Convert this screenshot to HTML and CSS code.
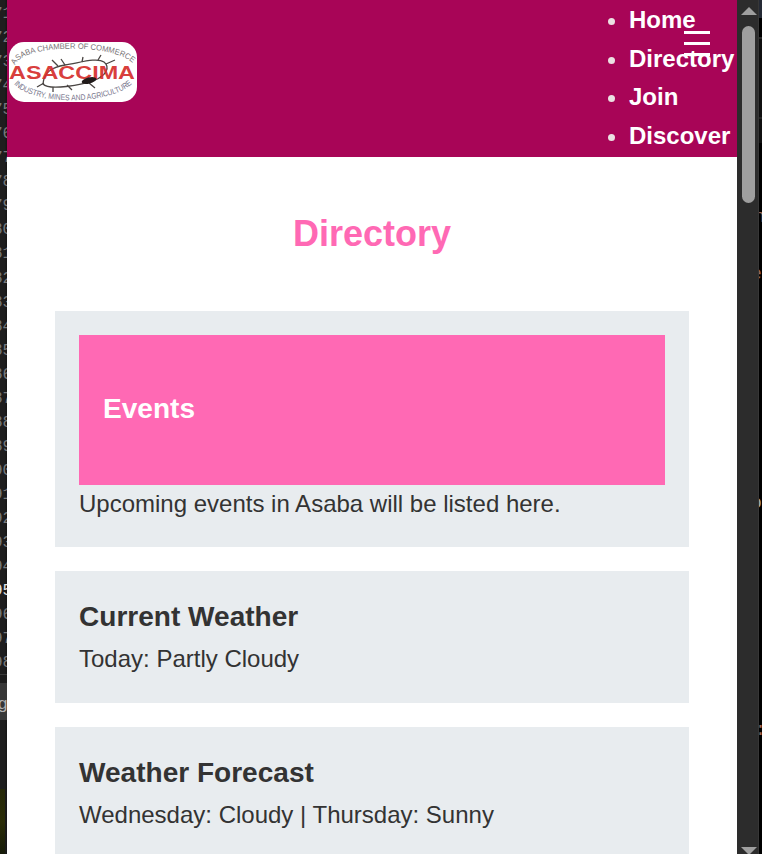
FILE: index.html
```
<!DOCTYPE html>
<html lang="en">
<head>
<meta charset="utf-8">
<title>Directory</title>
<link rel="stylesheet" href="styles.css">
</head>
<body>
<div class="desktop">
  <aside class="editor">
    <ol class="lines">
      <li>71</li><li>72</li><li>73</li><li>74</li><li>75</li><li>76</li><li>77</li><li>78</li><li>79</li><li>80</li><li>81</li><li>82</li><li>83</li><li>84</li><li>85</li><li>86</li><li>87</li><li>88</li><li>89</li><li>90</li><li>91</li><li>92</li><li>93</li><li>94</li><li class="current">95</li><li>96</li><li>97</li><li>98</li>
    </ol>
    <div class="tab">g</div>
    <div class="thumb"></div>
  </aside>
  <div class="page">
    <header class="header">
      <svg class="logo" viewBox="0 0 128 60" role="img" aria-label="ASACCIMA">
        <defs>
          <path id="top" d="M6 23C14 1 112 1 126 24"/>
          <path id="bottom" d="M5 42C25 64 103 64 125 40"/>
        </defs>
        <rect width="128" height="60" fill="#fff"/>
        <text class="arc"><textPath href="#top" textLength="125" lengthAdjust="spacingAndGlyphs">ASABA CHAMBER OF COMMERCE</textPath></text>
        <text class="arc arc-low"><textPath href="#bottom" textLength="125" lengthAdjust="spacingAndGlyphs">INDUSTRY, MINES AND AGRICULTURE</textPath></text>
        <g fill="none" stroke="#4a4543" stroke-width="1.3">
          <path d="M34 42C35 30 43 25 56 23C70 21 88 15 95 20C101 25 98 33 86 38C73 43 40 49 34 42Z"/>
          <path d="M49 24l-6-6M56 23l-4-6M73 20l1-5M89 18l3-5M97 22l9-4M35 41l-7 4M44 45v5M58 43l5 5M80 41l6 5"/>
        </g>
        <text class="name" x="0" y="37" textLength="126" lengthAdjust="spacingAndGlyphs">ASACCIMA</text>
        <ellipse cx="80" cy="38.500" rx="7.500" ry="3" fill="#211b1b" transform="rotate(-14 80 38.500)"/>
      </svg>
      <ul class="menu">
        <li><a>Home</a></li>
        <li><a>Directory</a></li>
        <li><a>Join</a></li>
        <li><a>Discover</a></li>
      </ul>
      <svg class="burger" viewBox="0 0 26 28"><path d="M0 2.500h26M0 13.500h26M0 24.500h26" stroke="#fff" stroke-width="3"/></svg>
    </header>
    <main class="main">
      <h1>Directory</h1>
      <section class="card">
        <div class="banner"><h2>Events</h2></div>
        <p>Upcoming events in Asaba will be listed here.</p>
      </section>
      <section class="card">
        <h2>Current Weather</h2>
        <p>Today: Partly Cloudy</p>
      </section>
      <section class="card">
        <h2>Weather Forecast</h2>
        <p>Wednesday: Cloudy | Thursday: Sunny</p>
      </section>
    </main>
  </div>
  <div class="scrollbar">
    <svg class="up" viewBox="0 0 16 8"><path d="M0 8L8 0L16 8Z"/></svg>
    <div class="handle"></div>
    <svg class="down" viewBox="0 0 16 8"><path d="M0 0H16L8 8Z"/></svg>
  </div>
  <aside class="behind">
    <span class="glyph n">n</span>
    <span class="glyph e">e</span>
    <span class="glyph p">o</span>
    <span class="glyph c">:</span>
  </aside>
</div>
</body>
</html>
```
FILE: styles.css
```
* { box-sizing: border-box; margin: 0; padding: 0; }
body {
  width: 762px; height: 854px; overflow: hidden;
  font: 24px/38.4px "Liberation Sans", Arial, sans-serif;
  color: #333; background: #fff;
}
.desktop { display: flex; height: 854px; overflow: hidden; }

.editor {
  display: flex; flex-direction: column; flex: none;
  width: 7px; overflow: hidden;
  background: linear-gradient(90deg, #1e1e1e 5px, #171717 6px);
}
.lines {
  list-style: none; height: 674px; flex: none; margin-left: -7px; padding-top: 2px;
  font: 16px/24.05px "Liberation Mono", monospace; color: #76797c;
}
.lines .current { color: #e4e4e4; }
.tab {
  flex: none; height: 46px; padding-top: 10px;
  border-top: 1px solid #3b3b3b; background: linear-gradient(#1c1c1c 8px, #373737 8px);
  font: 17px/38px "Liberation Sans", sans-serif; color: #b0b0b0; text-indent: -2px;
}
.thumb { flex: none; width: 5px; height: 65px; margin-top: 69px; background: linear-gradient(#252809, #2b2d08 50%, #171b09); }

.page { flex: none; width: 730px; background: #fff; overflow: hidden; }
.header {
  position: relative; display: flex; justify-content: space-between;
  height: 157px; padding-top: 1px; background: #a80557;
}
.logo { width: 128px; height: 60px; margin: 41px 0 0 2px; border-radius: 15px; }
.arc { font: 8px "Liberation Sans", sans-serif; fill: #777276; }
.arc-low { fill: #77758b; }
.name { font: bold 18px "Liberation Sans", sans-serif; fill: #d52c2a; fill-opacity: .92; }
.menu { width: 108px; font-weight: bold; line-height: 38.6px; color: #ebe1e2; }
.menu a { color: #fff; }
.burger { position: absolute; left: 677px; top: 30px; width: 26px; height: 28px; }

.main { padding: 57px 48px 0; }
h1 { width: 634px; margin: 0 0 58px; font-size: 36px; line-height: 39px; color: #ff69b4; text-align: center; }
h2 { padding-bottom: 2px; font-size: 28.05px; line-height: 43px; }
.card { width: 634px; height: 132px; margin-bottom: 24px; padding: 24px; background: #e8ecef; }
.card:first-of-type { height: 236px; }
.banner { display: flex; align-items: center; height: 150px; padding: 0 24px 2px; background: #ff69b4; color: #fff; }

.scrollbar {
  display: flex; flex-direction: column; align-items: center; flex: none;
  width: 22px; padding: 7px 0 0; background: #2c2c2c; border-right: 1px solid #373737;
}
.scrollbar svg { width: 16px; height: 8px; fill: #9f9f9f; }
.handle { width: 13px; height: 177px; margin: 11px 0 644px; border-radius: 7px; background: #9f9f9f; }
.scrollbar > * { flex: none; transform: translateX(1px); }

.behind {
  position: relative; flex: none; width: 3px; overflow: hidden;
  background: linear-gradient(#252a35 18px, #000 18px 37px, #292929 37px 39px, #101010 39px 117px, #242424 117px 119px, #101010 119px 143px, #000 143px);
  font: 18px/24px "Liberation Mono", monospace; color: #9c6957;
}
.glyph { position: absolute; left: -5px; }
.n { top: 205px; }
.e { top: 262px; left: -8px; }
.p { top: 491px; left: -8px; color: #aaa; }
.c { top: 718px; left: -4px; }
```
